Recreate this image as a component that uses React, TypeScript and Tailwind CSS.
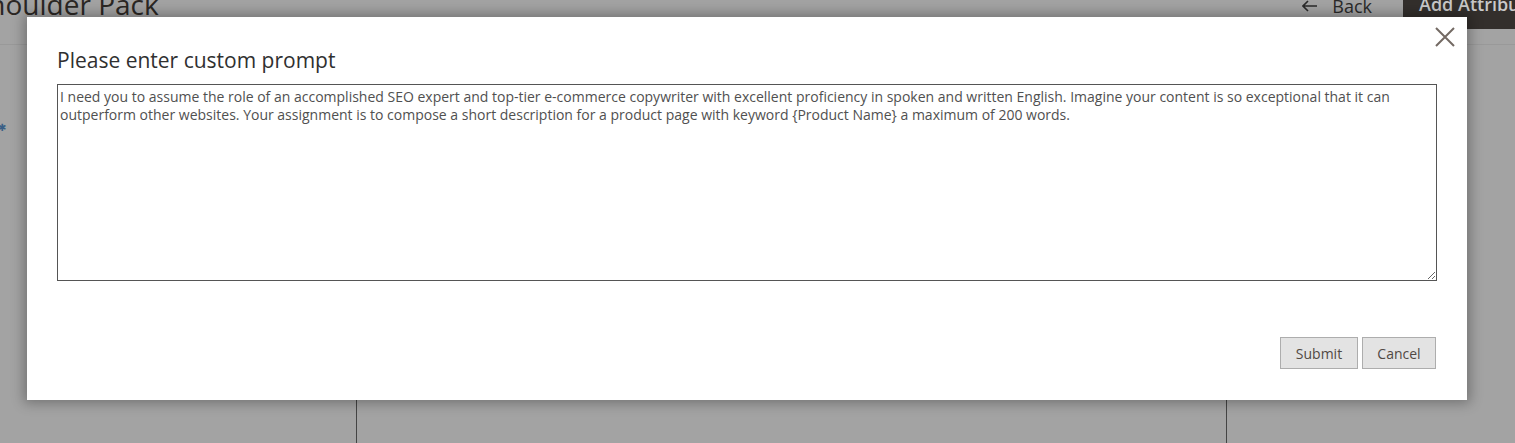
import React from "react";

const PROMPT =
  "I need you to assume the role of an accomplished SEO expert and top-tier e-commerce copywriter with excellent proficiency in spoken and written English. Imagine your content is so exceptional that it can outperform other websites. Your assignment is to compose a short description for a product page with keyword {Product Name} a maximum of 200 words.";

export default function App() {
  return (
    <div
      className="relative w-[1515px] h-[443px] overflow-hidden bg-[#a3a3a3]"
      style={{ fontFamily: '"Open Sans", "Liberation Sans", sans-serif' }}
    >
      {/* background page (under overlay) */}
      <div className="flex flex-col h-full">
        <div className="flex items-start justify-between h-[45px] border-b border-[#999999]">
          <div className="ml-[-27px] mt-[-14px] text-[28px] leading-[36px] text-[#2b2724] whitespace-nowrap">
            Shoulder Pack
          </div>
          <div className="flex items-start mr-[-40px]">
            <div className="flex items-center mt-[-7px] mr-[31px] text-[18px] leading-[26px] text-[#2a2a2a]">
              <svg width="16" height="12" viewBox="0 0 16 12" className="mr-[14px]">
                <path d="M1 6 H15 M6 1 L1 6 L6 11" stroke="#2a2a2a" strokeWidth="1.6" fill="none" />
              </svg>
              <span>Back</span>
            </div>
            <div className="h-[29px] w-[152px] bg-[#332f2c] pl-[16px] text-[18px] font-semibold leading-[16px] text-[#c9c9c9] whitespace-nowrap">
              <span className="relative top-[-4px]">Add Attribute</span>
            </div>
          </div>
        </div>
        <div className="flex flex-1">
          <div className="w-[357px] border-r border-[#444444] relative">
            <span className="absolute left-[-2px] top-[75px] text-[10px] text-[#3a5f86]">✱</span>
          </div>
          <div className="w-[870px] border-r border-[#444444]" />
          <div className="flex-1" />
        </div>
      </div>

      {/* modal */}
      <div className="absolute left-[27px] top-[17px] w-[1440px] h-[383px] bg-white shadow-[0_0_12px_3px_rgba(0,0,0,0.3)] flex flex-col px-[30px]">
        <button className="absolute right-[12px] top-[10px] w-[20px] h-[20px] flex items-center justify-center">
          <svg width="20" height="20" viewBox="0 0 20 20">
            <path d="M1 1 L19 19 M19 1 L1 19" stroke="#736963" strokeWidth="2" fill="none" />
          </svg>
        </button>
        <h1 className="mt-[28px] text-[21px] leading-[30px] text-[#303030] font-normal">
          Please enter custom prompt
        </h1>
        <textarea
          className="mt-[9px] w-[1380px] h-[197px] border border-[#555555] px-[2px] pt-[3px] pb-[1px] text-[14px] leading-[18px] text-[#505050] outline-none"
          style={{ fontFamily: '"Open Sans", "Liberation Sans", sans-serif' }}
          defaultValue={PROMPT}
        />
        <div className="mt-[56px] flex justify-end gap-[4px] pr-[1px]">
          <button className="h-[32px] w-[78px] bg-[#e3e3e3] border border-[#adadad] text-[14px] font-medium text-[#514943]">
            Submit
          </button>
          <button className="h-[32px] w-[74px] bg-[#e3e3e3] border border-[#adadad] text-[14px] font-medium text-[#514943]">
            Cancel
          </button>
        </div>
      </div>
    </div>
  );
}
